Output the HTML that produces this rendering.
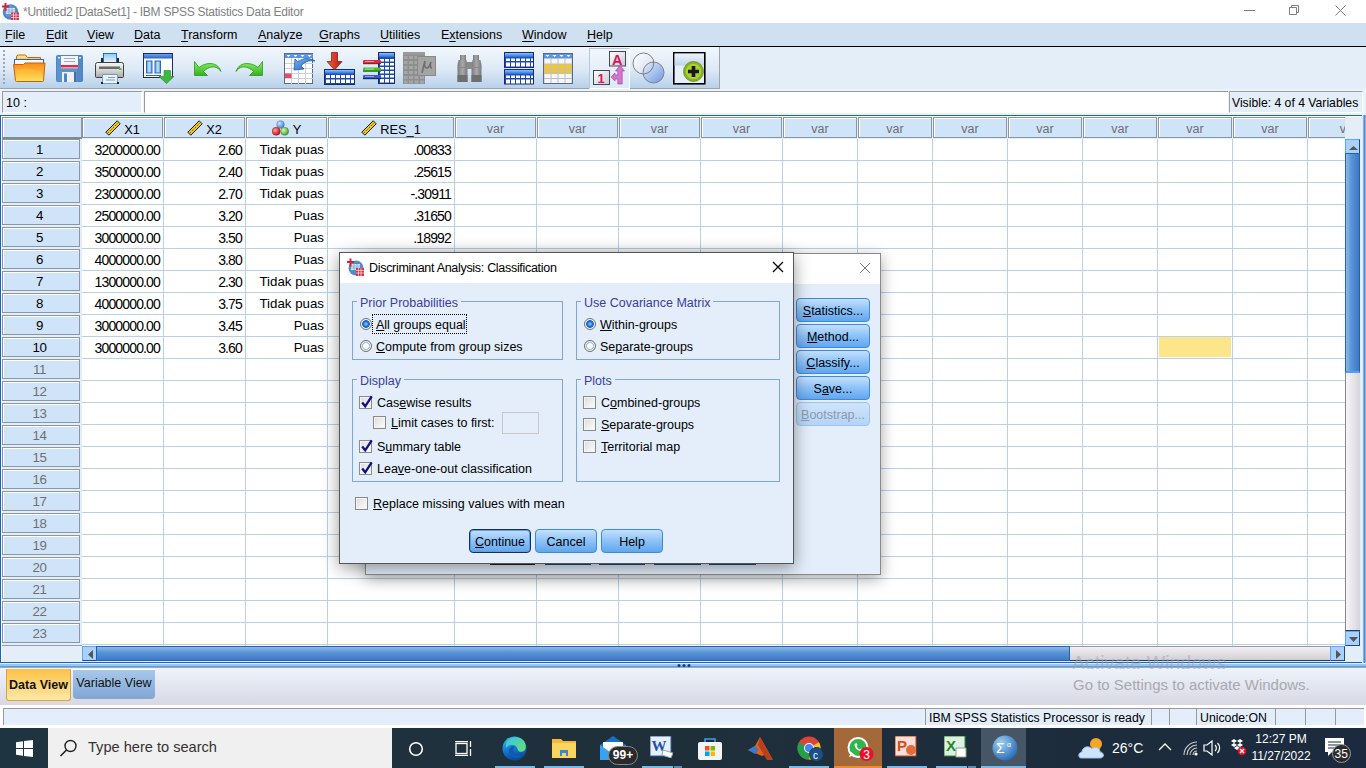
<!DOCTYPE html>
<html><head><meta charset="utf-8">
<style>
*{margin:0;padding:0;box-sizing:border-box}
html,body{width:1366px;height:768px;overflow:hidden;background:#fff;font-family:"Liberation Sans",sans-serif;font-size:12px;color:#000}
.a{position:absolute}
#title{left:0;top:0;width:1366px;height:23px;background:#fff}
#menubar{left:0;top:23px;width:1366px;height:23px;background:#cfe0f1}
#menubar span{position:absolute;top:5px;font-size:12.5px;color:#000}
#menubar u{text-decoration:underline;text-decoration-thickness:1px;text-underline-offset:2px}
#blk{left:0;top:46px;width:1366px;height:1px;background:#000}
#toolbar{left:0;top:47px;width:1366px;height:42px;background:#e3eef9}
#tbsec{left:0;top:47px;width:720px;height:42px;background:linear-gradient(#f2f7fd,#dde9f6 55%,#b7d1eb);border-right:1px solid #a0a4a8;border-bottom:1px solid #a0a4a8}
#refrow{left:0;top:89px;width:1366px;height:26px;background:#eaf3fc}
.hc{background:#cfe3f9;border:1px solid #8a96a4;box-shadow:inset 1px 1px 0 #fff;text-align:center;line-height:18px;padding-top:0;font-size:12.8px;color:#000;white-space:nowrap;overflow:hidden}
.hc.var{color:#6f6f6f;padding-top:2px;font-size:12.5px}
.rh{background:#cfe3f9;border:1px solid #8a96a4;box-shadow:inset 1px 1px 0 #fff;text-align:center;line-height:19px;padding-right:3px;font-size:13.3px;letter-spacing:-0.4px}
.rh.g{color:#6f6f6f}
.dc{text-align:right;line-height:22px;font-size:13.3px;white-space:nowrap}
.dc.n{font-size:14px;letter-spacing:-0.85px}
.sbtn{background:#a9d1fb;border:1px solid #1a4a8a;border-top-color:#5aa8f8;border-left-color:#5aa8f8}
.sb{height:17px;background:#e3eefa;border-top:1px solid #999;border-left:1px solid #999;font-size:12.3px;line-height:18px;padding-left:3px;white-space:nowrap;overflow:hidden}
.btn{border:1px solid #3a8ae0;border-radius:4px;background:linear-gradient(#c4e0fd,#8cc2f8 50%,#62a6ee);text-align:center;font-size:12.5px;line-height:22px;padding-top:1px;color:#000;white-space:nowrap}
.btn u,.lbl u{text-decoration:underline;text-decoration-thickness:1px;text-underline-offset:1px}
.btn.def{border:1px solid #1a3050;box-shadow:inset 0 0 0 1px #5aa0f0}
.btn.dis{background:linear-gradient(#cfe4fb,#b4d4f6);border-color:#9cc4ee;color:#8a9ab0}

.grp{border:1px solid #7ea6d8;border-top-color:#7ea6d8}
.lgd{background:#e3eefa;padding:0 3px;font-size:12.5px;color:#3c3ca0;line-height:14px}
.lbl{font-size:12.5px;line-height:14px;color:#000;white-space:nowrap}
.radio{width:12px;height:12px;border-radius:50%;border:1px solid #707070;background:radial-gradient(circle,#fff 0 2.6px,#a6c6e6 3.2px 3.8px,#f0f0f0 4.3px)}
.radio.on{background:radial-gradient(circle,#7ab4f0 0 1.2px,#1a6ed6 2.2px 3.6px,#f4f4f4 4.1px)}
.chk{width:13px;height:13px;border:1px solid #8a8a8a;background:linear-gradient(135deg,#dcdcdc,#fdfdfd);box-shadow:inset 0 0 0 1px #f4f4f4}
</style></head><body>
<div id="title" class="a">
  <svg class="a" style="left:1px;top:2px" width="18" height="18" viewBox="0 0 18 18">
  <circle cx="9.5" cy="10" r="7.8" fill="#4a86c8"/>
  <circle cx="9" cy="9" r="6" fill="#6aa2dc" opacity="0.6"/>
  <rect x="5" y="6" width="9" height="6" fill="#dbe8f6"/>
  <path d="M5 8h9M5 10h9M8 6v6M11 6v6" stroke="#6a9ad0" stroke-width="0.6"/>
  <rect x="10" y="10.5" width="8" height="7.5" fill="#d8324a"/>
  <path d="M10 13h8M10 15.5h8M12.5 10.5v8M15 10.5v8" stroke="#fff" stroke-width="0.6"/>
  <path d="M1 4.5h7M4.5 1v8" stroke="#d8223a" stroke-width="2"/>
</svg>
  <div class="a" style="left:23px;top:5px;font-size:12px;letter-spacing:-0.25px;color:#808080">*Untitled2 [DataSet1] - IBM SPSS Statistics Data Editor</div>
  <svg class="a" style="left:1243px;top:5px" width="12" height="12"><path d="M1 5.5h11" stroke="#808080" stroke-width="1"/></svg>
  <svg class="a" style="left:1289px;top:4px" width="12" height="12"><path d="M0.5 3.5h7v7h-7z M2.5 3.5v-2h7v7h-2" stroke="#808080" fill="none" stroke-width="1"/></svg>
  <svg class="a" style="left:1334px;top:4px" width="13" height="13"><path d="M1.5 1.5l10 10M11.5 1.5l-10 10" stroke="#808080" stroke-width="1"/></svg>
</div>
<div id="menubar" class="a">
  <span style="left:5px"><u>F</u>ile</span>
  <span style="left:46px"><u>E</u>dit</span>
  <span style="left:87px"><u>V</u>iew</span>
  <span style="left:134px"><u>D</u>ata</span>
  <span style="left:181px"><u>T</u>ransform</span>
  <span style="left:258px"><u>A</u>nalyze</span>
  <span style="left:319px"><u>G</u>raphs</span>
  <span style="left:380px"><u>U</u>tilities</span>
  <span style="left:441px">E<u>x</u>tensions</span>
  <span style="left:522px"><u>W</u>indow</span>
  <span style="left:587px"><u>H</u>elp</span>
</div>
<div id="blk" class="a"></div>
<div id="toolbar" class="a"></div>
<div id="tbsec" class="a"></div>

<div class="a" style="left:3px;top:50px;width:2px;height:36px;background:repeating-linear-gradient(#9aa8b8 0 2px,transparent 2px 4px)"></div>
<!-- folder -->
<svg class="a" style="left:13px;top:53px" width="33" height="30" viewBox="0 0 33 30">
  <defs>
    <linearGradient id="gf" x1="0" y1="0" x2="0" y2="1"><stop offset="0" stop-color="#fb8c1a"/><stop offset="0.55" stop-color="#fcb640"/><stop offset="1" stop-color="#ffe668"/></linearGradient>
    <linearGradient id="gft" x1="0" y1="0" x2="0" y2="1"><stop offset="0" stop-color="#fff0a0"/><stop offset="1" stop-color="#f6c020"/></linearGradient>
  </defs>
  <path d="M3.5 7.5v-3.5q0-2 2-2h7l2 2.5h13v3" fill="url(#gft)" stroke="#c8640c"/>
  <rect x="1.5" y="6.5" width="29" height="6" fill="#f4f8fc" stroke="#2a62d0"/>
  <path d="M0.5 11.5h10l1.5-1.5h20l-1.5 17.5q0 1-1 1h-26q-1 0-1-1z" fill="url(#gf)" stroke="#c8600c"/>
  <path d="M3 17q12-4 25 2v7h-24z" fill="#ffd23a" opacity="0.35"/>
</svg>
<!-- floppy -->
<svg class="a" style="left:56px;top:55px" width="27" height="27" viewBox="0 0 27 27">
  <path d="M1.5 0.5h24q1 0 1 1v24q0 1-1 1h-24q-1 0-1-1v-24q0-1 1-1z" fill="#5b93cc" stroke="#4f86c0"/>
  <rect x="21" y="0.5" width="5.5" height="26" fill="#4a80bc" opacity="0.5"/>
  <rect x="5" y="1" width="17" height="12" fill="#f2f6fa"/>
  <rect x="5" y="10" width="17" height="2.5" fill="#d62e52"/>
  <rect x="5" y="12.5" width="17" height="1" fill="#f0a0b4"/>
  <path d="M8 3.5h11M8 6.5h11" stroke="#a8acb4" stroke-width="1"/>
  <rect x="2" y="2" width="2" height="1.5" fill="#dfe8f2"/>
  <rect x="23" y="2" width="2" height="1.5" fill="#dfe8f2"/>
  <path d="M6 17h13l1 1v9h-14z" fill="#eef0f2"/>
  <path d="M18 17h2v10h-2z" fill="#3f6fa8"/>
  <rect x="8" y="18.5" width="3" height="8.5" fill="#4f86c0"/>
</svg>
<!-- printer -->
<svg class="a" style="left:95px;top:53px" width="29" height="32" viewBox="0 0 29 32">
  <defs>
    <linearGradient id="gpb" x1="0" y1="0" x2="0" y2="1"><stop offset="0" stop-color="#f6f6f6"/><stop offset="0.5" stop-color="#d8d8d8"/><stop offset="1" stop-color="#a8a8a8"/></linearGradient>
    <linearGradient id="gpp" x1="0" y1="0" x2="0" y2="1"><stop offset="0" stop-color="#8cc8f8"/><stop offset="1" stop-color="#f4faff"/></linearGradient>
  </defs>
  <rect x="8.5" y="0.5" width="13" height="10" fill="url(#gpp)" stroke="#1a6ee0"/>
  <rect x="6" y="5" width="2" height="6" fill="#222"/><rect x="22" y="5" width="2" height="6" fill="#222"/>
  <path d="M2.5 9.5h24q2 0 2 2v12q0 1-1 1h-26q-1 0-1-1v-12q0-2 2-2z" fill="url(#gpb)" stroke="#404040"/>
  <rect x="4" y="13.5" width="21" height="2.5" fill="#6a6a6a"/>
  <rect x="24" y="15" width="2.5" height="2" fill="#3ccc3c"/>
  <path d="M7.5 21.5h15v9h-15z" fill="#e6f2fc" stroke="#7a98b8"/>
  <path d="M13 24.5h7M11 27h9" stroke="#8a9aaa"/>
  <rect x="6" y="29" width="2" height="2" fill="#222"/><rect x="22" y="29" width="2" height="2" fill="#222"/>
</svg>
<!-- dialog recall -->
<svg class="a" style="left:143px;top:53px" width="32" height="31" viewBox="0 0 32 31">
  <defs><linearGradient id="gdr" x1="0" y1="0" x2="0" y2="1"><stop offset="0" stop-color="#6aa4ec"/><stop offset="1" stop-color="#2a64c8"/></linearGradient>
  <linearGradient id="gdc" x1="0" y1="0" x2="1" y2="0"><stop offset="0" stop-color="#4aa0e0"/><stop offset="0.5" stop-color="#c4e4fa"/><stop offset="1" stop-color="#4aa0e0"/></linearGradient></defs>
  <rect x="0.5" y="0.5" width="29" height="24" fill="#fbfdff" stroke="#1e2a6a"/>
  <rect x="1" y="1" width="28" height="4.5" fill="url(#gdr)"/>
  <rect x="3.5" y="8" width="5.5" height="12" fill="url(#gdc)" stroke="#2a64c8"/>
  <rect x="12" y="8" width="5.5" height="12" fill="url(#gdc)" stroke="#2a64c8"/>
  <rect x="3" y="22" width="15" height="1" fill="#2a64c8"/>
  <path d="M21 17.5h6.5v6h3.5l-7.5 7l-7.5-7h5z" fill="#3cb83a" stroke="#2a8a2a" stroke-width="0.6"/>
</svg>
<!-- undo -->
<svg class="a" style="left:194px;top:61px" width="28" height="16" viewBox="0 0 28 16">
  <defs><linearGradient id="gu" x1="0" y1="0" x2="0" y2="1"><stop offset="0" stop-color="#8ef060"/><stop offset="1" stop-color="#30b020"/></linearGradient></defs>
  <path d="M0.5 0.5L0.5 14.5L13.5 14.5L9.5 10.5C13 7 17 5.5 20.5 6C23.5 6.5 25.5 8.5 27 10.5C25 4.5 20.5 2.5 16 2.5C12 2.5 8 4 5 6.5Z" fill="url(#gu)" stroke="#2a9a1a" stroke-width="0.8"/>
</svg>
<!-- redo -->
<svg class="a" style="left:235px;top:61px" width="28" height="16" viewBox="0 0 28 16">
  <path d="M27.5 0.5L27.5 14.5L14.5 14.5L18.5 10.5C15 7 11 5.5 7.5 6C4.5 6.5 2.5 8.5 1 10.5C3 4.5 7.5 2.5 12 2.5C16 2.5 20 4 23 6.5Z" fill="url(#gu)" stroke="#2a9a1a" stroke-width="0.8"/>
</svg>
<!-- goto case -->
<svg class="a" style="left:284px;top:53px" width="32" height="31" viewBox="0 0 32 31">
  <defs><linearGradient id="gga" x1="0" y1="0" x2="1" y2="1"><stop offset="0" stop-color="#7ab8f8"/><stop offset="1" stop-color="#1a58c0"/></linearGradient></defs>
  <rect x="0.5" y="0.5" width="28" height="30" fill="#fff" stroke="#5a6a88"/>
  <rect x="1" y="1" width="28" height="4" fill="#5a96e6"/>
  <path d="M2.5 2h4l-2 2zM9.5 2h4l-2 2zM16.5 2h4l-2 2zM23.5 2h4l-2 2z" fill="#fff"/>
  <path d="M1 10.5h28M1 15.5h28M1 20.5h28M1 25.5h28M7.5 5v26M14.5 5v26M21.5 5v26" stroke="#c8d0dc"/>
  <rect x="1" y="20.5" width="6.5" height="4.5" fill="#e84a6a"/>
  <path d="M10 17l1-11l3 3c4-4 11-5 17-1c-6-1-11 1-14 5l3 3z" fill="url(#gga)" stroke="#1a4a9a" stroke-width="0.7"/>
</svg>
<!-- insert cases -->
<svg class="a" style="left:324px;top:52px" width="31" height="33" viewBox="0 0 31 33">
  <defs><linearGradient id="gic" x1="0" y1="0" x2="0" y2="1"><stop offset="0" stop-color="#8ac4fa"/><stop offset="1" stop-color="#1a62d0"/></linearGradient>
  <linearGradient id="gra" x1="0" y1="0" x2="1" y2="0"><stop offset="0" stop-color="#f06040"/><stop offset="1" stop-color="#b81a10"/></linearGradient></defs>
  <rect x="0.5" y="17.5" width="30" height="15" fill="#1a4ab0" stroke="#1a2a70"/>
  <rect x="1" y="18" width="29" height="4" fill="url(#gic)"/>
  <path d="M2 23h4v3h-4zM7 23h4v3h-4zM12 23h4v3h-4zM17 23h4v3h-4zM22 23h4v3h-4zM27 23h3v3h-3zM2 27.5h4v3.5h-4zM7 27.5h4v3.5h-4zM12 27.5h4v3.5h-4zM17 27.5h4v3.5h-4zM22 27.5h4v3.5h-4zM27 27.5h3v3.5h-3z" fill="#fff"/>
  <path d="M7.5 0.5h6v9h4.5l-7.5 8.5l-7.5-8.5h4.5z" fill="url(#gra)" stroke="#7a1008" stroke-width="0.7"/>
</svg>
<!-- insert variable -->
<svg class="a" style="left:363px;top:52px" width="33" height="33" viewBox="0 0 33 33">
  <rect x="15.5" y="0.5" width="16" height="31" fill="#1a4ab0" stroke="#1a2a70"/>
  <rect x="16" y="1" width="15" height="4.5" fill="url(#gic)"/>
  <path d="M17 7h4v2.5h-4zM22 7h4v2.5h-4zM27 7h4v2.5h-4zM17 11h4v2.5h-4zM22 11h4v2.5h-4zM27 11h4v2.5h-4zM17 15h4v2.5h-4zM22 15h4v2.5h-4zM27 15h4v2.5h-4zM17 19h4v2.5h-4zM22 19h4v2.5h-4zM27 19h4v2.5h-4zM17 23h4v2.5h-4zM22 23h4v2.5h-4zM27 23h4v2.5h-4zM17 27h4v3.5h-4zM22 27h4v3.5h-4zM27 27h4v3.5h-4z" fill="#fff"/>
  <rect x="0" y="8" width="18" height="4" rx="1" fill="#e02848"/><rect x="0" y="11" width="18" height="1.2" fill="#8a2030"/><rect x="2" y="9.2" width="9" height="0.8" fill="#ffb0a0"/>
  <rect x="0" y="15.5" width="18" height="4" rx="1" fill="#44c02a"/><rect x="0" y="18.5" width="18" height="1.2" fill="#2a6a20"/><rect x="2" y="16.7" width="9" height="0.8" fill="#c0f0a0"/>
  <rect x="0" y="23" width="18" height="4" rx="1" fill="#3a58d0"/><rect x="0" y="26" width="18" height="1.2" fill="#1a2a70"/><rect x="2" y="24.2" width="9" height="0.8" fill="#a0b8f8"/>
</svg>
<!-- split file grey -->
<svg class="a" style="left:403px;top:52px" width="33" height="33" viewBox="0 0 33 33">
  <rect x="0" y="0" width="22" height="32" fill="#8e8e8e"/>
  <rect x="0" y="0" width="22" height="3" fill="#9a9a9a"/>
  <path d="M1 4h3.5v3h-3.5zM6 4h4v3h-4zM11.5 4h4v3h-4zM1 9h3.5v3h-3.5zM6 9h4v3h-4zM11.5 9h4v3h-4zM1 14h3.5v3h-3.5zM6 14h4v3h-4zM11.5 14h4v3h-4zM1 19h3.5v3h-3.5zM6 19h4v3h-4zM11.5 19h4v3h-4zM1 24h3.5v3h-3.5zM6 24h4v3h-4zM11.5 24h4v3h-4zM1 28.5h3.5v3h-3.5zM6 28.5h4v3h-4zM11.5 28.5h4v3h-4zM17 24h4v3h-4zM17 28.5h4v3h-4z" fill="#a6a6a6"/>
  <rect x="14.5" y="4.5" width="18" height="19" fill="#a4a4a4" stroke="#888"/>
  <path d="M19 21c1-4 2-9 3-12M22 10c-1 4 0 6 2 6c2 0 3-3 4-6M28 10c-1 3-1 6 1 6" fill="none" stroke="#6e6e6e" stroke-width="1.6"/>
</svg>
<!-- binoculars -->
<svg class="a" style="left:457px;top:55px" width="25" height="28" viewBox="0 0 25 28">
  <defs><linearGradient id="gbn" x1="0" y1="0" x2="1" y2="0"><stop offset="0" stop-color="#7a7a7a"/><stop offset="0.5" stop-color="#a8a8a8"/><stop offset="1" stop-color="#7a7a7a"/></linearGradient></defs>
  <rect x="3" y="0" width="6" height="5" fill="url(#gbn)"/>
  <rect x="16" y="0" width="6" height="5" fill="url(#gbn)"/>
  <path d="M1.5 5h8l1 5v17h-10v-17z" fill="url(#gbn)"/>
  <path d="M15.5 5h8l1 5v17h-10v-17z" fill="url(#gbn)"/>
  <rect x="10" y="7" width="5" height="7" fill="#8a8a8a"/>
  <rect x="0.5" y="20" width="10" height="7" fill="#6e6e6e"/>
  <rect x="14.5" y="20" width="10" height="7" fill="#6e6e6e"/>
  <rect x="0.5" y="12" width="10" height="1" fill="#8a8a8a"/>
  <rect x="14.5" y="12" width="10" height="1" fill="#8a8a8a"/>
</svg>
<!-- split tables -->
<svg class="a" style="left:504px;top:52px" width="31" height="33" viewBox="0 0 31 33">
  <rect x="0.5" y="0.5" width="29" height="15" fill="#1a4ab0" stroke="#1a2a70"/>
  <rect x="1" y="1" width="28" height="4.5" fill="url(#gic)"/>
  <path d="M2 6.5h4v2.5h-4zM7 6.5h4v2.5h-4zM12 6.5h4v2.5h-4zM17 6.5h4v2.5h-4zM22 6.5h4v2.5h-4zM27 6.5h2v2.5h-2zM2 10.5h4v4h-4zM7 10.5h4v4h-4zM12 10.5h4v4h-4zM17 10.5h4v4h-4zM22 10.5h4v4h-4zM27 10.5h2v4h-2z" fill="#fff"/>
  <rect x="0.5" y="17.5" width="29" height="14.5" fill="#1a4ab0" stroke="#1a2a70"/>
  <rect x="1" y="18" width="28" height="4.5" fill="url(#gic)"/>
  <path d="M2 23.5h4v2.5h-4zM7 23.5h4v2.5h-4zM12 23.5h4v2.5h-4zM17 23.5h4v2.5h-4zM22 23.5h4v2.5h-4zM27 23.5h2v2.5h-2zM2 27.5h4v4h-4zM7 27.5h4v4h-4zM12 27.5h4v4h-4zM17 27.5h4v4h-4zM22 27.5h4v4h-4zM27 27.5h2v4h-2z" fill="#fff"/>
</svg>
<!-- yellow table -->
<svg class="a" style="left:543px;top:53px" width="30" height="31" viewBox="0 0 30 31">
  <rect x="0.5" y="0.5" width="29" height="30" fill="#b8c0cc" stroke="#5a6a88"/>
  <rect x="1" y="1" width="28" height="4" fill="#5a96e6"/>
  <path d="M2.5 2h4l-2 2zM9.5 2h4l-2 2zM16.5 2h4l-2 2zM23.5 2h4l-2 2z" fill="#fff"/>
  <path d="M1.5 6h6v4.5h-6zM8.5 6h6v4.5h-6zM15.5 6h6v4.5h-6zM22.5 6h6v4.5h-6zM1.5 21h6v4h-6zM8.5 21h6v4h-6zM15.5 21h6v4h-6zM22.5 21h6v4h-6zM1.5 26h6v4h-6zM8.5 26h6v4h-6zM15.5 26h6v4h-6zM22.5 26h6v4h-6z" fill="#f6f6f6"/>
  <path d="M1.5 11.5h6v4h-6zM8.5 11.5h6v4h-6zM15.5 11.5h6v4h-6zM22.5 11.5h6v4h-6zM1.5 16.5h6v3.5h-6zM8.5 16.5h6v3.5h-6zM15.5 16.5h6v3.5h-6zM22.5 16.5h6v3.5h-6z" fill="#f6c628"/>
</svg>
<!-- value labels pressed -->
<div class="a" style="left:589px;top:48px;width:41px;height:41px;background:linear-gradient(#f0f6fc,#dce9f6);border:1px solid #b8c8d8;border-bottom-color:#fff;border-right-color:#fff"></div>
<svg class="a" style="left:592px;top:51px" width="34" height="34" viewBox="0 0 34 34">
  <defs><linearGradient id="gvl" x1="0" y1="0" x2="1" y2="1"><stop offset="0" stop-color="#ffffff"/><stop offset="1" stop-color="#c8ccd4"/></linearGradient></defs>
  <rect x="17.5" y="0.5" width="16" height="14.5" fill="url(#gvl)" stroke="#404858"/>
  <text x="20" y="14" font-size="14.5" font-weight="bold" fill="#e0145a" font-family="Liberation Sans">A</text>
  <rect x="1.5" y="19.5" width="16" height="14" fill="url(#gvl)" stroke="#404858"/>
  <text x="5.5" y="31.5" font-size="13" font-weight="bold" fill="#e0145a" font-family="Liberation Sans">1</text>
  <path d="M19 26L23 22L23 24L25.8 24L25.8 20L23.5 20L28 14.5L32.5 20L30.2 20L30.2 33L25.8 33L25.8 28L23 28L23 30Z" fill="#d476cc" stroke="#9a3a98" stroke-width="0.6"/>
</svg>
<!-- circles -->
<svg class="a" style="left:632px;top:52px" width="34" height="32" viewBox="0 0 34 32">
  <defs><linearGradient id="gc" x1="0" y1="0" x2="1" y2="1"><stop offset="0" stop-color="#e8f0fc"/><stop offset="1" stop-color="#5a8ce0"/></linearGradient>
  <linearGradient id="gc1" x1="0" y1="0" x2="1" y2="1"><stop offset="0" stop-color="#ffffff"/><stop offset="1" stop-color="#d0dcf0"/></linearGradient></defs>
  <circle cx="11.5" cy="11.5" r="10.5" fill="url(#gc1)" stroke="#808080"/>
  <circle cx="21.5" cy="20.5" r="10.5" fill="url(#gc)" fill-opacity="0.85" stroke="#808080"/>
  <path d="M11.5 22A10.5 10.5 0 0 0 11.5 22" stroke="#808080"/>
  <path d="M21.5 10 A10.5 10.5 0 0 1 11.5 22" fill="none" stroke="#808080"/>
</svg>
<!-- green plus -->
<svg class="a" style="left:673px;top:52px" width="33" height="33" viewBox="0 0 33 33">
  <defs><linearGradient id="gpl" x1="0" y1="0" x2="0" y2="1"><stop offset="0" stop-color="#eef4fa"/><stop offset="1" stop-color="#bcd4ee"/></linearGradient></defs>
  <rect x="0.8" y="0.8" width="31" height="31" fill="#e6f0fa" stroke="#000" stroke-width="1.6"/>
  <rect x="1.6" y="1.6" width="29.4" height="12" fill="url(#gpl)"/>
  <circle cx="20.5" cy="19.5" r="10" fill="#8ab020" stroke="#6a8a18" stroke-width="0.8"/>
  <circle cx="20.5" cy="19.5" r="7.8" fill="#a8d038"/>
  <path d="M20.5 14v11M15 19.5h11" stroke="#1a1a1a" stroke-width="3.6"/>
</svg>
<div id="refrow" class="a"></div>

<div class="a" style="left:2px;top:91px;width:141px;height:22px;background:#e3eefa;border-top:1px solid #999;border-left:1px solid #999;border-bottom:1px solid #fff;border-right:2px solid #fff"></div>
<div class="a" style="left:6px;top:96px;font-size:12.5px">10 :</div>
<div class="a" style="left:144px;top:91px;width:1084px;height:22px;background:#fff;border-top:1px solid #999;border-left:1px solid #999;border-bottom:1px solid #fff"></div>
<div class="a" style="left:1229px;top:91px;width:134px;height:22px;background:#e3eef9;border-top:1px solid #a0a0a0;border-left:1px solid #a0a0a0;border-bottom:1px solid #fff;border-right:1px solid #fff"></div>
<div class="a" style="left:1232px;top:96px;font-size:12.2px">Visible: 4 of 4 Variables</div>

<div class="a" style="left:0;top:115px;width:1363px;height:548px;border:1px solid #1565c0;background:#e3eef9;box-shadow:inset 1px 1px 0 #fff"></div>
<div class="a" style="left:82px;top:139px;width:1263px;height:507px;background:#fff;overflow:hidden">
<div class="a" style="left:0;top:21px;width:1263px;height:1px;background:#b8d0e8"></div>
<div class="a" style="left:0;top:43px;width:1263px;height:1px;background:#b8d0e8"></div>
<div class="a" style="left:0;top:65px;width:1263px;height:1px;background:#b8d0e8"></div>
<div class="a" style="left:0;top:87px;width:1263px;height:1px;background:#b8d0e8"></div>
<div class="a" style="left:0;top:109px;width:1263px;height:1px;background:#b8d0e8"></div>
<div class="a" style="left:0;top:131px;width:1263px;height:1px;background:#b8d0e8"></div>
<div class="a" style="left:0;top:153px;width:1263px;height:1px;background:#b8d0e8"></div>
<div class="a" style="left:0;top:175px;width:1263px;height:1px;background:#b8d0e8"></div>
<div class="a" style="left:0;top:197px;width:1263px;height:1px;background:#b8d0e8"></div>
<div class="a" style="left:0;top:219px;width:1263px;height:1px;background:#b8d0e8"></div>
<div class="a" style="left:0;top:241px;width:1263px;height:1px;background:#b8d0e8"></div>
<div class="a" style="left:0;top:263px;width:1263px;height:1px;background:#b8d0e8"></div>
<div class="a" style="left:0;top:285px;width:1263px;height:1px;background:#b8d0e8"></div>
<div class="a" style="left:0;top:307px;width:1263px;height:1px;background:#b8d0e8"></div>
<div class="a" style="left:0;top:329px;width:1263px;height:1px;background:#b8d0e8"></div>
<div class="a" style="left:0;top:351px;width:1263px;height:1px;background:#b8d0e8"></div>
<div class="a" style="left:0;top:373px;width:1263px;height:1px;background:#b8d0e8"></div>
<div class="a" style="left:0;top:395px;width:1263px;height:1px;background:#b8d0e8"></div>
<div class="a" style="left:0;top:417px;width:1263px;height:1px;background:#b8d0e8"></div>
<div class="a" style="left:0;top:439px;width:1263px;height:1px;background:#b8d0e8"></div>
<div class="a" style="left:0;top:461px;width:1263px;height:1px;background:#b8d0e8"></div>
<div class="a" style="left:0;top:483px;width:1263px;height:1px;background:#b8d0e8"></div>
<div class="a" style="left:0;top:505px;width:1263px;height:1px;background:#b8d0e8"></div>
<div class="a" style="left:81px;top:0;width:1px;height:507px;background:#b8d0e8"></div>
<div class="a" style="left:163px;top:0;width:1px;height:507px;background:#b8d0e8"></div>
<div class="a" style="left:245px;top:0;width:1px;height:507px;background:#b8d0e8"></div>
<div class="a" style="left:372px;top:0;width:1px;height:507px;background:#b8d0e8"></div>
<div class="a" style="left:454px;top:0;width:1px;height:507px;background:#b8d0e8"></div>
<div class="a" style="left:536px;top:0;width:1px;height:507px;background:#b8d0e8"></div>
<div class="a" style="left:618px;top:0;width:1px;height:507px;background:#b8d0e8"></div>
<div class="a" style="left:700px;top:0;width:1px;height:507px;background:#b8d0e8"></div>
<div class="a" style="left:775px;top:0;width:1px;height:507px;background:#b8d0e8"></div>
<div class="a" style="left:850px;top:0;width:1px;height:507px;background:#b8d0e8"></div>
<div class="a" style="left:925px;top:0;width:1px;height:507px;background:#b8d0e8"></div>
<div class="a" style="left:1000px;top:0;width:1px;height:507px;background:#b8d0e8"></div>
<div class="a" style="left:1075px;top:0;width:1px;height:507px;background:#b8d0e8"></div>
<div class="a" style="left:1150px;top:0;width:1px;height:507px;background:#b8d0e8"></div>
<div class="a" style="left:1225px;top:0;width:1px;height:507px;background:#b8d0e8"></div>
</div>
<div class="a" style="left:1159px;top:337px;width:72px;height:20px;background:#fde58a"></div>
<div class="a" style="left:2px;top:117px;width:1343px;height:22px;overflow:hidden">
<div class="a hc" style="left:0;top:0;width:80px;height:22px;border-bottom:2px solid #7d8a98"></div>
<div class="a hc" style="left:80px;top:0;width:81px;height:21px"><svg width="16" height="16" viewBox="0 0 16 16" style="position:relative;top:2px;margin-right:3px"><path d="M0.8 12.2L12.2 0.8L15.2 3.8L3.8 15.2Z" fill="#f8cc10" stroke="#1a1a10" stroke-width="1"/><path d="M2.6 11.4L11.4 2.6" stroke="#d8c888" stroke-width="1"/><path d="M3 12.8L12.8 3" stroke="#1a1a10" stroke-width="1" stroke-dasharray="1 1.4"/></svg>X1</div>
<div class="a hc" style="left:162px;top:0;width:81px;height:21px"><svg width="16" height="16" viewBox="0 0 16 16" style="position:relative;top:2px;margin-right:3px"><path d="M0.8 12.2L12.2 0.8L15.2 3.8L3.8 15.2Z" fill="#f8cc10" stroke="#1a1a10" stroke-width="1"/><path d="M2.6 11.4L11.4 2.6" stroke="#d8c888" stroke-width="1"/><path d="M3 12.8L12.8 3" stroke="#1a1a10" stroke-width="1" stroke-dasharray="1 1.4"/></svg>X2</div>
<div class="a hc" style="left:244px;top:0;width:81px;height:21px"><svg width="17" height="16" viewBox="0 0 17 16" style="position:relative;top:2px;margin-right:4px"><defs><radialGradient id="nb" cx="0.35" cy="0.35" r="0.7"><stop offset="0" stop-color="#cfe6ff"/><stop offset="1" stop-color="#3a7ad8"/></radialGradient><radialGradient id="nr" cx="0.35" cy="0.35" r="0.7"><stop offset="0" stop-color="#ff9a9a"/><stop offset="1" stop-color="#c80a14"/></radialGradient><radialGradient id="ng" cx="0.35" cy="0.35" r="0.7"><stop offset="0" stop-color="#d8f8b0"/><stop offset="1" stop-color="#3aa22a"/></radialGradient></defs><circle cx="8.5" cy="4.5" r="3.8" fill="url(#nb)" stroke="#5a7ab0" stroke-width="0.5"/><circle cx="4.2" cy="11.3" r="4" fill="url(#nr)" stroke="#8a1010" stroke-width="0.5"/><circle cx="12.6" cy="11.3" r="4" fill="url(#ng)" stroke="#3a7a2a" stroke-width="0.5"/></svg>Y</div>
<div class="a hc" style="left:326px;top:0;width:126px;height:21px"><svg width="16" height="16" viewBox="0 0 16 16" style="position:relative;top:2px;margin-right:3px"><path d="M0.8 12.2L12.2 0.8L15.2 3.8L3.8 15.2Z" fill="#f8cc10" stroke="#1a1a10" stroke-width="1"/><path d="M2.6 11.4L11.4 2.6" stroke="#d8c888" stroke-width="1"/><path d="M3 12.8L12.8 3" stroke="#1a1a10" stroke-width="1" stroke-dasharray="1 1.4"/></svg>RES_1</div>
<div class="a hc var" style="left:453px;top:0;width:81px;height:21px">var</div>
<div class="a hc var" style="left:535px;top:0;width:81px;height:21px">var</div>
<div class="a hc var" style="left:617px;top:0;width:81px;height:21px">var</div>
<div class="a hc var" style="left:699px;top:0;width:81px;height:21px">var</div>
<div class="a hc var" style="left:781px;top:0;width:74px;height:21px">var</div>
<div class="a hc var" style="left:856px;top:0;width:74px;height:21px">var</div>
<div class="a hc var" style="left:931px;top:0;width:74px;height:21px">var</div>
<div class="a hc var" style="left:1006px;top:0;width:74px;height:21px">var</div>
<div class="a hc var" style="left:1081px;top:0;width:74px;height:21px">var</div>
<div class="a hc var" style="left:1156px;top:0;width:74px;height:21px">var</div>
<div class="a hc var" style="left:1231px;top:0;width:74px;height:21px">var</div>
<div class="a hc var" style="left:1306px;top:0;width:81px;height:21px">var</div>
</div>
<div class="a rh" style="left:2px;top:139px;width:78px;height:20px">1</div>
<div class="a rh" style="left:2px;top:161px;width:78px;height:20px">2</div>
<div class="a rh" style="left:2px;top:183px;width:78px;height:20px">3</div>
<div class="a rh" style="left:2px;top:205px;width:78px;height:20px">4</div>
<div class="a rh" style="left:2px;top:227px;width:78px;height:20px">5</div>
<div class="a rh" style="left:2px;top:249px;width:78px;height:20px">6</div>
<div class="a rh" style="left:2px;top:271px;width:78px;height:20px">7</div>
<div class="a rh" style="left:2px;top:293px;width:78px;height:20px">8</div>
<div class="a rh" style="left:2px;top:315px;width:78px;height:20px">9</div>
<div class="a rh" style="left:2px;top:337px;width:78px;height:20px">10</div>
<div class="a rh g" style="left:2px;top:359px;width:78px;height:20px">11</div>
<div class="a rh g" style="left:2px;top:381px;width:78px;height:20px">12</div>
<div class="a rh g" style="left:2px;top:403px;width:78px;height:20px">13</div>
<div class="a rh g" style="left:2px;top:425px;width:78px;height:20px">14</div>
<div class="a rh g" style="left:2px;top:447px;width:78px;height:20px">15</div>
<div class="a rh g" style="left:2px;top:469px;width:78px;height:20px">16</div>
<div class="a rh g" style="left:2px;top:491px;width:78px;height:20px">17</div>
<div class="a rh g" style="left:2px;top:513px;width:78px;height:20px">18</div>
<div class="a rh g" style="left:2px;top:535px;width:78px;height:20px">19</div>
<div class="a rh g" style="left:2px;top:557px;width:78px;height:20px">20</div>
<div class="a rh g" style="left:2px;top:579px;width:78px;height:20px">21</div>
<div class="a rh g" style="left:2px;top:601px;width:78px;height:20px">22</div>
<div class="a rh g" style="left:2px;top:623px;width:78px;height:20px">23</div>
<div class="a dc n" style="left:82px;top:139px;width:78px">3200000.00</div>
<div class="a dc n" style="left:164px;top:139px;width:78px">2.60</div>
<div class="a dc" style="left:246px;top:139px;width:78px">Tidak puas</div>
<div class="a dc n" style="left:328px;top:139px;width:123px">.00833</div>
<div class="a dc n" style="left:82px;top:161px;width:78px">3500000.00</div>
<div class="a dc n" style="left:164px;top:161px;width:78px">2.40</div>
<div class="a dc" style="left:246px;top:161px;width:78px">Tidak puas</div>
<div class="a dc n" style="left:328px;top:161px;width:123px">.25615</div>
<div class="a dc n" style="left:82px;top:183px;width:78px">2300000.00</div>
<div class="a dc n" style="left:164px;top:183px;width:78px">2.70</div>
<div class="a dc" style="left:246px;top:183px;width:78px">Tidak puas</div>
<div class="a dc n" style="left:328px;top:183px;width:123px">-.30911</div>
<div class="a dc n" style="left:82px;top:205px;width:78px">2500000.00</div>
<div class="a dc n" style="left:164px;top:205px;width:78px">3.20</div>
<div class="a dc" style="left:246px;top:205px;width:78px">Puas</div>
<div class="a dc n" style="left:328px;top:205px;width:123px">.31650</div>
<div class="a dc n" style="left:82px;top:227px;width:78px">3000000.00</div>
<div class="a dc n" style="left:164px;top:227px;width:78px">3.50</div>
<div class="a dc" style="left:246px;top:227px;width:78px">Puas</div>
<div class="a dc n" style="left:328px;top:227px;width:123px">.18992</div>
<div class="a dc n" style="left:82px;top:249px;width:78px">4000000.00</div>
<div class="a dc n" style="left:164px;top:249px;width:78px">3.80</div>
<div class="a dc" style="left:246px;top:249px;width:78px">Puas</div>
<div class="a dc n" style="left:82px;top:271px;width:78px">1300000.00</div>
<div class="a dc n" style="left:164px;top:271px;width:78px">2.30</div>
<div class="a dc" style="left:246px;top:271px;width:78px">Tidak puas</div>
<div class="a dc n" style="left:82px;top:293px;width:78px">4000000.00</div>
<div class="a dc n" style="left:164px;top:293px;width:78px">3.75</div>
<div class="a dc" style="left:246px;top:293px;width:78px">Tidak puas</div>
<div class="a dc n" style="left:82px;top:315px;width:78px">3000000.00</div>
<div class="a dc n" style="left:164px;top:315px;width:78px">3.45</div>
<div class="a dc" style="left:246px;top:315px;width:78px">Puas</div>
<div class="a dc n" style="left:82px;top:337px;width:78px">3000000.00</div>
<div class="a dc n" style="left:164px;top:337px;width:78px">3.60</div>
<div class="a dc" style="left:246px;top:337px;width:78px">Puas</div>
<div class="a" style="left:1345px;top:117px;width:15px;height:22px;background:#e3eef9"></div>
<div class="a sbtn" style="left:1345px;top:139px;width:15px;height:15px"><svg width="13" height="13" style="position:absolute;left:1px;top:1px"><path d="M2 9h9l-4.5-4z" fill="#555"/></svg></div>
<div class="a" style="left:1345px;top:153px;width:15px;height:220px;background:linear-gradient(90deg,#8fbbe8,#5a95d6 40%,#3e7ac4);border:1px solid #1f62b8;border-bottom:2px solid #4aa0ff"></div>
<div class="a" style="left:1345px;top:373px;width:15px;height:258px;background:linear-gradient(90deg,#f6f5f8,#d8d4dc);border-left:1px solid #888;border-bottom:1px solid #1a3e6a"></div>
<div class="a sbtn" style="left:1345px;top:631px;width:15px;height:15px"><svg width="13" height="13" style="position:absolute;left:1px;top:1px"><path d="M2 4h9l-4.5 5z" fill="#555"/></svg></div>
<div class="a" style="left:2px;top:645px;width:80px;height:17px;background:#e3eef9;border-top:1px solid #8ea0b4"></div>
<div class="a sbtn" style="left:82px;top:646px;width:15px;height:15px"><svg width="13" height="13" style="position:absolute;left:1px;top:1px"><path d="M9 2v9l-5-4.5z" fill="#555"/></svg></div>
<div class="a" style="left:96px;top:646px;width:974px;height:15px;background:linear-gradient(#8fbbe8,#5a95d6 40%,#3e7ac4);border:1px solid #1f62b8"></div>
<div class="a" style="left:1070px;top:646px;width:261px;height:15px;background:linear-gradient(#f2f0f4,#d2ced6);border-top:1px solid #999;border-bottom:1px solid #1a3e6a"></div>
<div class="a sbtn" style="left:1330px;top:646px;width:15px;height:15px"><svg width="13" height="13" style="position:absolute;left:1px;top:1px"><path d="M4 2v9l5-4.5z" fill="#555"/></svg></div>
<div class="a" style="left:1345px;top:646px;width:15px;height:16px;background:#e3eef9"></div>

<div class="a" style="left:1362px;top:115px;width:1px;height:548px;background:#e3eefa"></div>
<div class="a" style="left:1363px;top:115px;width:3px;height:548px;background:linear-gradient(90deg,#9cc4ee,#4680cc 60%,#b8d6f4)"></div>
<!-- back dialog -->
<div class="a" style="left:365px;top:253px;width:516px;height:322px;background:#e3eefa;border:1px solid #8a8a8a;box-shadow:0 4px 14px rgba(0,0,0,0.35)"></div>
<div class="a" style="left:366px;top:254px;width:514px;height:30px;background:#fff"></div>
<svg class="a" style="left:859px;top:262px" width="12" height="12"><path d="M1 1l10 10M11 1l-10 10" stroke="#777" stroke-width="1"/></svg>
<div class="a btn" style="left:796px;top:298px;width:74px;height:24px"><u>S</u>tatistics...</div>
<div class="a btn" style="left:796px;top:324px;width:74px;height:24px"><u>M</u>ethod...</div>
<div class="a btn" style="left:796px;top:350px;width:74px;height:24px"><u>C</u>lassify...</div>
<div class="a btn" style="left:796px;top:376px;width:74px;height:24px">S<u>a</u>ve...</div>
<div class="a btn dis" style="left:796px;top:402px;width:74px;height:24px"><u>B</u>ootstrap...</div>
<div class="a" style="left:490px;top:564px;width:45px;height:1px;background:#222"></div>
<div class="a" style="left:545px;top:564px;width:46px;height:1px;background:#1a4a80"></div>
<div class="a" style="left:599px;top:564px;width:46px;height:1px;background:#1a4a80"></div>
<div class="a" style="left:654px;top:564px;width:47px;height:1px;background:#1a4a80"></div>
<div class="a" style="left:709px;top:564px;width:47px;height:1px;background:#1a4a80"></div>
<!-- front dialog -->
<div class="a" style="left:339px;top:252px;width:455px;height:312px;background:#e3eefa;border:1px solid #555;box-shadow:0 4px 16px rgba(0,0,0,0.4)"></div>
<div class="a" style="left:340px;top:253px;width:453px;height:30px;background:#fff"></div>
<svg class="a" style="left:347px;top:258px" width="18" height="18" viewBox="0 0 18 18">
  <circle cx="9" cy="10" r="7.5" fill="#4f8ccc"/>
  <rect x="4" y="6" width="9" height="6" fill="#dbe8f6"/>
  <path d="M4 8h9M4 10h9M7 6v6M10 6v6" stroke="#6a9ad0" stroke-width="0.6"/>
  <rect x="9" y="10" width="8" height="8" fill="#d8324a"/>
  <path d="M9 12.5h8M9 15h8M11.5 10v8M14 10v8" stroke="#fff" stroke-width="0.6"/>
  <path d="M0 4h7M3.5 0.5v8" stroke="#d8223a" stroke-width="2"/>
</svg>
<div class="a" style="left:369px;top:261px;font-size:12.5px;letter-spacing:-0.3px;color:#000">Discriminant Analysis: Classification</div>
<svg class="a" style="left:772px;top:261px" width="12" height="12"><path d="M1 1l10 10M11 1l-10 10" stroke="#000" stroke-width="1.3"/></svg>

<div class="a grp" style="left:352px;top:301px;width:211px;height:59px"></div>
<div class="a lgd" style="left:357px;top:296px">Prior Probabilities</div>
<div class="a radio on" style="left:360px;top:318px"></div>
<div class="a lbl" style="left:376px;top:318px"><u>A</u>ll groups equal</div>
<div class="a" style="left:372px;top:314px;width:95px;height:20px;border:1px dotted #000"></div>
<div class="a radio" style="left:360px;top:340px"></div>
<div class="a lbl" style="left:376px;top:340px"><u>C</u>ompute from group sizes</div>

<div class="a grp" style="left:576px;top:301px;width:204px;height:59px"></div>
<div class="a lgd" style="left:581px;top:296px">Use Covariance Matrix</div>
<div class="a radio on" style="left:584px;top:318px"></div>
<div class="a lbl" style="left:600px;top:318px"><u>W</u>ithin-groups</div>
<div class="a radio" style="left:584px;top:340px"></div>
<div class="a lbl" style="left:600px;top:340px">Se<u>p</u>arate-groups</div>

<div class="a grp" style="left:352px;top:379px;width:211px;height:103px"></div>
<div class="a lgd" style="left:357px;top:374px">Display</div>
<div class="a chk on" style="left:359px;top:396px"><svg width="14" height="14" style="position:absolute;left:0;top:-1px;overflow:visible"><path d="M2.2 6.5l3 3.8l6.5-10" fill="none" stroke="#101080" stroke-width="2.3"/></svg></div>
<div class="a lbl" style="left:377px;top:396px">Cas<u>e</u>wise results</div>
<div class="a chk" style="left:373px;top:416px"></div>
<div class="a lbl" style="left:391px;top:416px"><u>L</u>imit cases to first:</div>
<div class="a" style="left:502px;top:412px;width:37px;height:22px;border:1px solid #c8c8c8;background:#e3eefa"></div>
<div class="a chk on" style="left:359px;top:440px"><svg width="14" height="14" style="position:absolute;left:0;top:-1px;overflow:visible"><path d="M2.2 6.5l3 3.8l6.5-10" fill="none" stroke="#101080" stroke-width="2.3"/></svg></div>
<div class="a lbl" style="left:377px;top:440px">S<u>u</u>mmary table</div>
<div class="a chk on" style="left:359px;top:462px"><svg width="14" height="14" style="position:absolute;left:0;top:-1px;overflow:visible"><path d="M2.2 6.5l3 3.8l6.5-10" fill="none" stroke="#101080" stroke-width="2.3"/></svg></div>
<div class="a lbl" style="left:377px;top:462px">Lea<u>v</u>e-one-out classification</div>

<div class="a grp" style="left:576px;top:379px;width:204px;height:103px"></div>
<div class="a lgd" style="left:581px;top:374px">Plots</div>
<div class="a chk" style="left:583px;top:396px"></div>
<div class="a lbl" style="left:601px;top:396px">C<u>o</u>mbined-groups</div>
<div class="a chk" style="left:583px;top:418px"></div>
<div class="a lbl" style="left:601px;top:418px"><u>S</u>eparate-groups</div>
<div class="a chk" style="left:583px;top:440px"></div>
<div class="a lbl" style="left:601px;top:440px"><u>T</u>erritorial map</div>

<div class="a chk" style="left:355px;top:497px"></div>
<div class="a lbl" style="left:373px;top:497px"><u>R</u>eplace missing values with mean</div>

<div class="a btn def" style="left:469px;top:529px;width:62px;height:24px"><u>C</u>ontinue</div>
<div class="a btn" style="left:535px;top:529px;width:62px;height:24px">Cancel</div>
<div class="a btn" style="left:601px;top:529px;width:62px;height:24px">Help</div>


<div class="a" style="left:0;top:663px;width:1366px;height:1px;background:#d2f2ff"></div>
<div class="a" style="left:0;top:664px;width:1366px;height:2px;background:#98c6f2"></div>
<div class="a" style="left:0;top:666px;width:1366px;height:1px;background:#6b97c6"></div>
<div class="a" style="left:0;top:667px;width:1366px;height:1px;background:#86aedb"></div>
<div class="a" style="left:0;top:668px;width:1366px;height:37px;background:linear-gradient(#eef3fb,#d8d8e4)"></div>
<svg class="a" style="left:677px;top:663px" width="14" height="5"><circle cx="2" cy="2.5" r="1.5" fill="#1a3a7a"/><circle cx="7" cy="2.5" r="1.5" fill="#1a3a7a"/><circle cx="12" cy="2.5" r="1.5" fill="#1a3a7a"/></svg>
<div class="a" style="left:6px;top:669px;width:65px;height:32px;background:linear-gradient(#fcc247,#fee8a6);border:1px solid #d8a440;border-top:none;border-radius:0 0 3px 3px;font-weight:bold;font-size:12.5px;line-height:32px;text-align:center;color:#111">Data View</div>
<div class="a" style="left:73px;top:669px;width:82px;height:30px;background:linear-gradient(#a8c8ea,#7fa6d4);border-top:1px solid #fff;border-radius:0 0 4px 4px;font-size:12.5px;line-height:27px;text-align:center;color:#111">Variable View</div>
<div class="a" style="left:0;top:705px;width:1366px;height:23px;background:#fff"></div>
<div class="a sb" style="left:3px;top:708px;width:922px"></div>
<div class="a sb" style="left:925px;top:708px;width:226px">IBM SPSS Statistics Processor is ready</div>
<div class="a sb" style="left:1151px;top:708px;width:18px"></div>
<div class="a sb" style="left:1169px;top:708px;width:27px"></div>
<div class="a sb" style="left:1196px;top:708px;width:79px">Unicode:ON</div>
<div class="a sb" style="left:1275px;top:708px;width:30px"></div>
<div class="a sb" style="left:1305px;top:708px;width:30px"></div>
<div class="a sb" style="left:1335px;top:708px;width:29px"></div>
<div class="a" style="left:1072px;top:648px;width:200px;height:21px;overflow:hidden"><div style="font-size:19.5px;line-height:30px;color:rgba(160,160,170,0.55);white-space:nowrap">Activate Windows</div></div>
<div class="a" style="left:1073px;top:676px;font-size:15px;color:#a9a9b0;white-space:nowrap">Go to Settings to activate Windows.</div>


<div class="a" style="left:0;top:728px;width:1366px;height:40px;background:linear-gradient(90deg,#1e3440,#1f2f3a 50%,#1b2a3e)"></div>
<svg class="a" style="left:16px;top:740px" width="17" height="17" viewBox="0 0 17 17"><path d="M0 2.3l7-1v6.7H0zM8 1.1L17 0v8H8zM0 9h7v6.7l-7-1zM8 9h9v8l-9-1.1z" fill="#fff"/></svg>
<div class="a" style="left:48px;top:728px;width:344px;height:40px;background:#f0f0f0"></div>
<svg class="a" style="left:59px;top:739px" width="19" height="19" viewBox="0 0 19 19"><circle cx="11.5" cy="7" r="5.5" fill="none" stroke="#222" stroke-width="1.4"/><path d="M7.5 11l-6 6" stroke="#222" stroke-width="1.6"/></svg>
<div class="a" style="left:88px;top:739px;font-size:14.6px;color:#333">Type here to search</div>
<svg class="a" style="left:408px;top:741px" width="16" height="16"><circle cx="8" cy="8" r="6.3" fill="none" stroke="#fff" stroke-width="1.6"/></svg>
<svg class="a" style="left:455px;top:741px" width="18" height="15" viewBox="0 0 18 15"><rect x="1" y="2.5" width="11" height="10" fill="none" stroke="#fff" stroke-width="1.3"/><path d="M0 0.7h13M0 14.3h13M15.5 0v6M15.5 8v7" stroke="#fff" stroke-width="1.3"/></svg>
<!-- edge -->
<svg class="a" style="left:502px;top:736px" width="25" height="25" viewBox="0 0 25 25">
  <defs>
    <linearGradient id="ge" x1="0" y1="0" x2="0.3" y2="1"><stop offset="0" stop-color="#3cc4f0"/><stop offset="0.55" stop-color="#1a7ad4"/><stop offset="1" stop-color="#0a4a9a"/></linearGradient>
    <linearGradient id="ge2" x1="0" y1="0" x2="1" y2="1"><stop offset="0" stop-color="#36c6e8"/><stop offset="1" stop-color="#6ae26a"/></linearGradient>
  </defs>
  <circle cx="12.5" cy="12.5" r="12" fill="url(#ge)"/>
  <path d="M4 7C7 1 16 -1 21 4C24.5 7.5 24.5 13 22 15C20 16.5 16 16 15.5 13C15 9.5 11 8 8 9C6 9.7 4.5 11 4 12Z" fill="url(#ge2)"/>
  <path d="M7 15C7 11 10 9.5 13 10.5C11 11.5 10.5 14 12 16.5C13.5 19 17 20 20 19C17.5 22.5 12 23.5 9 20.5C7.7 19 7 17 7 15Z" fill="#0d5cb0"/>
</svg>
<div class="a" style="left:495px;top:766px;width:40px;height:2px;background:#76b9ed"></div>
<!-- explorer -->
<svg class="a" style="left:552px;top:738px" width="24" height="20" viewBox="0 0 24 20"><path d="M0 1h9l2 2h13v17H0z" fill="#f4b93a"/><rect x="0" y="5" width="24" height="15" fill="#fcd55c"/><rect x="8" y="12" width="8" height="6" fill="#2f8ad8"/><rect x="10" y="15" width="4" height="5" fill="#fcd55c"/></svg>
<div class="a" style="left:544px;top:766px;width:40px;height:2px;background:#76b9ed"></div>
<!-- mail -->
<svg class="a" style="left:600px;top:736px" width="26" height="24" viewBox="0 0 26 24"><path d="M0 9l13-9l13 9v15H0z" fill="#1a6fc8"/><path d="M3 6h20v8l-10 6l-10-6z" fill="#fff"/><path d="M0 9l13 9l13-9v15H0z" fill="#3aa0f0"/></svg>
<div class="a" style="left:608px;top:746px;width:30px;height:19px;border-radius:10px;background:#2a2a2a;border:1px solid #888;color:#fff;font-size:12px;font-weight:bold;text-align:center;line-height:17px">99+</div>
<!-- word -->
<svg class="a" style="left:650px;top:736px" width="23" height="22" viewBox="0 0 23 22"><rect x="0" y="0" width="21" height="20" fill="#e8eef8" stroke="#2b5cb8"/><text x="1.5" y="15" font-size="15" font-weight="bold" fill="#1f4fb0" font-family="Liberation Serif">W</text><path d="M13 14l10 3l-2 5l-9-3z" fill="#fff" stroke="#8aa"/></svg>
<div class="a" style="left:642px;top:766px;width:31px;height:2px;background:#76b9ed"></div>
<div class="a" style="left:674px;top:766px;width:8px;height:2px;background:#5a8ab8"></div>
<!-- store -->
<svg class="a" style="left:698px;top:737px" width="24" height="23" viewBox="0 0 24 23"><path d="M7 5v-3h10v3" fill="none" stroke="#3aa0e8" stroke-width="1.6"/><rect x="0" y="5" width="24" height="18" rx="2" fill="#f4f4f4"/><rect x="7" y="9" width="4.5" height="4.5" fill="#f25022"/><rect x="12.5" y="9" width="4.5" height="4.5" fill="#7fba00"/><rect x="7" y="14.5" width="4.5" height="4.5" fill="#00a4ef"/><rect x="12.5" y="14.5" width="4.5" height="4.5" fill="#ffb900"/></svg>
<!-- matlab -->
<svg class="a" style="left:748px;top:737px" width="25" height="23" viewBox="0 0 25 23"><path d="M0 13l7-4l5-9l13 23l-6-6l-5 2z" fill="#e2621a"/><path d="M0 13l7-4l4 4l-4 4z" fill="#3a7ac8"/><path d="M12 0l-2 8l9 15l6 0z" fill="#b9401a"/></svg>
<!-- chrome -->
<svg class="a" style="left:797px;top:736px" width="27" height="26" viewBox="0 0 27 26"><circle cx="12" cy="12" r="11.5" fill="#db4437"/><path d="M12 12L21.96 6.25A11.5 11.5 0 0 1 12 23.5Z" fill="#f6c026"/><path d="M12 12L12 23.5A11.5 11.5 0 0 1 2.04 6.25Z" fill="#22a04a"/><circle cx="12" cy="12" r="5" fill="#fff"/><circle cx="12" cy="12" r="4" fill="#4285f4"/><circle cx="19.5" cy="18.5" r="7" fill="#1a4f8a" stroke="#1f2f3a"/><text x="16" y="22.5" font-size="10" fill="#fff" font-family="Liberation Sans">c</text></svg>
<div class="a" style="left:789px;top:766px;width:40px;height:2px;background:#76b9ed"></div>
<!-- whatsapp -->
<div class="a" style="left:834px;top:728px;width:48px;height:40px;background:#a4693a"></div>
<svg class="a" style="left:846px;top:736px" width="28" height="26" viewBox="0 0 28 26"><circle cx="12" cy="11.5" r="10.5" fill="#fff"/><circle cx="12" cy="11.5" r="8.5" fill="#2fb84a"/><path d="M3 21l2-5l4 3z" fill="#fff"/><path d="M8.5 8c0 4 3 7 7 7l1.5-1.5l-2-1l-1 1c-1.5-.5-3-2-3.5-3.5l1-1l-1-2z" fill="#fff"/><circle cx="20.5" cy="18" r="7" fill="#e8102a"/><text x="17.2" y="22.5" font-size="12" fill="#fff" font-family="Liberation Sans">3</text></svg>
<div class="a" style="left:834px;top:766px;width:48px;height:2px;background:#f08c2a"></div>
<!-- ppt -->
<svg class="a" style="left:895px;top:736px" width="23" height="22" viewBox="0 0 23 22"><rect x="0" y="0" width="21" height="20" fill="#f8e0d8" stroke="#c8401a"/><text x="2" y="15" font-size="15" font-weight="bold" fill="#d2501f" font-family="Liberation Sans">P</text><circle cx="16" cy="14" r="5" fill="#e46a3a"/></svg>
<div class="a" style="left:887px;top:766px;width:40px;height:2px;background:#76b9ed"></div>
<!-- excel -->
<svg class="a" style="left:944px;top:736px" width="23" height="22" viewBox="0 0 23 22"><rect x="0" y="0" width="21" height="20" fill="#e0f0e0" stroke="#2a8a3a"/><text x="2" y="15" font-size="15" font-weight="bold" fill="#1f8a2f" font-family="Liberation Sans">X</text><path d="M12 12h10v9H12z" fill="#fff" stroke="#8a8"/></svg>
<div class="a" style="left:936px;top:766px;width:31px;height:2px;background:#76b9ed"></div>
<div class="a" style="left:968px;top:766px;width:8px;height:2px;background:#5a8ab8"></div>
<!-- spss -->
<div class="a" style="left:981px;top:728px;width:45px;height:40px;background:#465664"></div>
<svg class="a" style="left:992px;top:735px" width="26" height="26" viewBox="0 0 26 26"><defs><radialGradient id="gs" cx="0.35" cy="0.3" r="0.8"><stop offset="0" stop-color="#9fd0f4"/><stop offset="1" stop-color="#1f64b0"/></radialGradient></defs><circle cx="13" cy="13" r="12.5" fill="url(#gs)"/><text x="4" y="18" font-size="14" fill="#fff" font-family="Liberation Sans">Σ</text><text x="15" y="12" font-size="7" fill="#fff" font-family="Liberation Sans">α</text></svg>
<div class="a" style="left:981px;top:766px;width:45px;height:2px;background:#76b9ed"></div>
<!-- tray -->
<svg class="a" style="left:1078px;top:737px" width="28" height="22" viewBox="0 0 28 22"><circle cx="18" cy="7" r="6" fill="#f6a623"/><path d="M3 21c-3 0-3-6 1-6c0-5 7-7 10-3c2-3 8-2 8 3c4 0 5 6 0 6z" fill="#cfe4f8" stroke="#9cc0e8"/></svg>
<div class="a" style="left:1112px;top:740px;font-size:14px;color:#fff">26°C</div>
<svg class="a" style="left:1158px;top:742px" width="14" height="9"><path d="M1 8l6-6l6 6" fill="none" stroke="#fff" stroke-width="1.3"/></svg>
<svg class="a" style="left:1183px;top:741px" width="15" height="15" viewBox="0 0 15 15"><path d="M1 14a13 13 0 0 1 13-13M4 14a10 10 0 0 1 10-10M7 14a7 7 0 0 1 7-7M10 14a4 4 0 0 1 4-4" fill="none" stroke="#ccc" stroke-width="1.1"/><circle cx="13" cy="13" r="1.6" fill="#fff"/></svg>
<svg class="a" style="left:1203px;top:740px" width="18" height="16" viewBox="0 0 18 16"><path d="M1 5h3l5-4v14l-5-4H1z" fill="none" stroke="#fff" stroke-width="1.2"/><path d="M12 5a4 4 0 0 1 0 6M14.5 3a7 7 0 0 1 0 10" fill="none" stroke="#fff" stroke-width="1.2"/></svg>
<svg class="a" style="left:1229px;top:738px" width="18" height="18" viewBox="0 0 18 18"><path d="M2 3l3-2l3 2l-3 2zM8 3l3-2l3 2l-3 2zM2 7l3-2l3 2l-3 2zM8 7l3-2l3 2l-3 2zM5 10l3-2l3 2l-3 2z" fill="#fff"/><circle cx="13" cy="13" r="4.3" fill="#e81123"/><path d="M11 11l4 4M15 11l-4 4" stroke="#fff" stroke-width="1.3"/></svg>
<div class="a" style="left:1250px;top:731px;width:62px;text-align:center;font-size:12px;color:#fff;line-height:17px">12:27 PM<br>11/27/2022</div>
<svg class="a" style="left:1324px;top:737px" width="30" height="28" viewBox="0 0 30 28"><path d="M1 1h19v14h-12l-4 4v-4H1z" fill="#fff"/><path d="M4 5h13M4 8h13M4 11h9" stroke="#1b2a3e" stroke-width="1.2"/><circle cx="17.5" cy="16.5" r="9" fill="#2a2a2a" stroke="#999"/><text x="10.6" y="21" font-size="12" fill="#fff" font-family="Liberation Sans">35</text></svg>

</body></html>
